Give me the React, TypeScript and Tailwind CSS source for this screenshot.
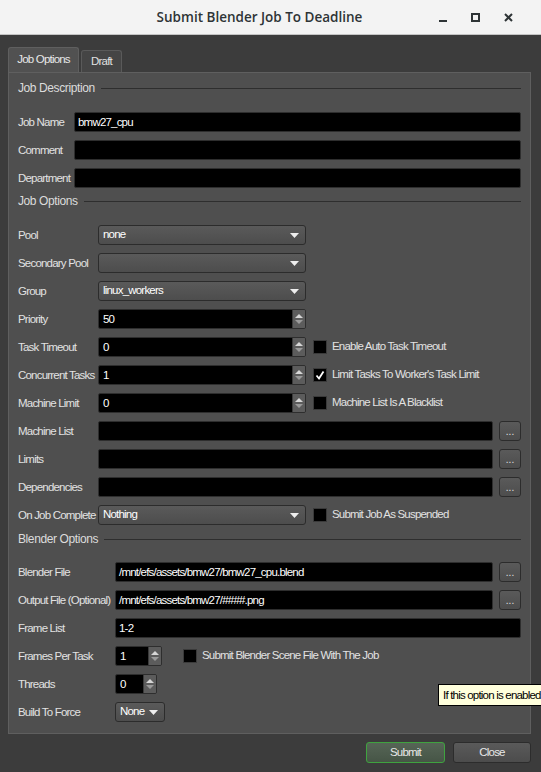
import React from 'react';

const UI_FONT = { fontFamily: '"Liberation Sans Narrow", "Liberation Sans", Arial, sans-serif' };

function Label({ text, width }: { text: string; width: string }) {
  return <div className={`${width} shrink-0 text-[#e2e2e2] leading-5 whitespace-nowrap`}>{text}</div>;
}

function TextField({ value = '', className = '' }: { value?: string; className?: string }) {
  return (
    <div className={`h-5 bg-black border border-[#2e2e2e] rounded-[2px] px-[3px] leading-[18px] text-white whitespace-nowrap overflow-hidden ${className}`}>
      {value}
    </div>
  );
}

function Arrow() {
  return (
    <svg width="9" height="5" viewBox="0 0 9 5" className="shrink-0">
      <path d="M0 0 L9 0 L4.5 5 Z" fill="#eeeeee" />
    </svg>
  );
}

function Dropdown({ value = '', className = '' }: { value?: string; className?: string }) {
  return (
    <div className={`h-5 flex items-center justify-between rounded-[3px] border border-[#2c2c2c] bg-gradient-to-b from-[#5a5a5a] to-[#4d4d4d] pl-[4px] pr-[6px] text-white ${className}`}>
      <span className="whitespace-nowrap">{value}</span>
      <Arrow />
    </div>
  );
}

function Spin({ value, className = '' }: { value: string; className?: string }) {
  return (
    <div className={`h-5 flex rounded-[2px] border border-[#2e2e2e] overflow-hidden ${className}`}>
      <div className="flex-1 bg-black px-[4px] leading-[18px] text-white">{value}</div>
      <div className="w-[13px] bg-[#5c5c5c] border-l border-[#3a3a3a] flex flex-col items-center justify-center gap-[2px]">
        <svg width="8" height="4" viewBox="0 0 8 4"><path d="M0 4 L8 4 L4 0 Z" fill="#d6d6d6" /></svg>
        <svg width="8" height="4" viewBox="0 0 8 4"><path d="M0 0 L8 0 L4 4 Z" fill="#9a9a9a" /></svg>
      </div>
    </div>
  );
}

function Check({ label, checked = false, className = '' }: { label: string; checked?: boolean; className?: string }) {
  return (
    <div className={`flex items-center gap-[5px] ${className}`}>
      <div className="w-[14px] h-[14px] bg-black border border-[#3a3a3a] flex items-center justify-center">
        {checked && (
          <svg width="10" height="10" viewBox="0 0 10 10">
            <path d="M1.5 5.5 L4 8.5 L8.5 1.5" stroke="#ffffff" strokeWidth="1.8" fill="none" />
          </svg>
        )}
      </div>
      <span className="text-[#e2e2e2] whitespace-nowrap">{label}</span>
    </div>
  );
}

function Browse() {
  return (
    <div className="ml-[6px] w-[22px] h-5 shrink-0 rounded-[3px] border border-[#2c2c2c] bg-gradient-to-b from-[#5a5a5a] to-[#4d4d4d] text-[10px] tracking-normal text-[#e0e0e0] flex items-end justify-center pb-[3px] leading-none">
      ...
    </div>
  );
}

function GroupTitle({ text }: { text: string }) {
  return (
    <div className="h-[14px] flex items-center gap-[6px]">
      <span className="text-[12px] tracking-[-0.4px] text-[#dcdcdc] whitespace-nowrap">{text}</span>
      <div className="flex-1 h-px bg-[#2e2e2e]" />
    </div>
  );
}

function Row({ children }: { children: React.ReactNode }) {
  return <div className="h-5 flex items-center">{children}</div>;
}

export default function App() {
  return (
    <div className="w-[541px] h-[772px] bg-[#3c3c3c] relative overflow-hidden text-[11.5px] tracking-[-0.8px]" style={UI_FONT}>
      {/* title bar */}
      <div className="h-[35px] bg-[#f3f3f3] border-b border-[#c4c4c4] flex items-center relative tracking-normal">
        <div
          className="absolute left-0 right-[22px] text-center text-[13.5px] font-semibold text-[#2e3436]"
          style={{ fontFamily: '"Open Sans", "Noto Sans", sans-serif' }}
        >
          Submit Blender Job To Deadline
        </div>
        <div className="ml-auto flex items-center gap-[24px] pr-[28px]">
          <svg width="8" height="10" viewBox="0 0 8 10"><rect x="0" y="8" width="8" height="2" fill="#2e3436" /></svg>
          <svg width="9" height="9" viewBox="0 0 9 9"><rect x="1" y="1" width="7" height="7" stroke="#2e3436" strokeWidth="2" fill="none" /></svg>
          <svg width="9" height="9" viewBox="0 0 9 9"><path d="M1 1 L8 8 M8 1 L1 8" stroke="#2e3436" strokeWidth="2" /></svg>
        </div>
      </div>

      {/* tabs */}
      <div className="pl-[8px] pt-[12px] flex items-end h-[37px]">
        <div className="h-[25px] w-[71px] bg-[#515151] border border-b-0 border-[#5f5f5f] rounded-t-[3px] text-[#e8e8e8] flex items-center justify-center">
          Job Options
        </div>
        <div className="ml-[2px] h-[22px] w-[41px] bg-[#454545] border border-b-0 border-[#5a5a5a] rounded-t-[3px] text-[#e0e0e0] flex items-center justify-center">
          Draft
        </div>
      </div>

      {/* panel */}
      <div className="ml-[8px] w-[523px] h-[662px] bg-[#4f4f4f] border border-[#5f5f5f] px-[9px] pt-[8px]">
        <GroupTitle text="Job Description" />
        <div className="mt-[17px] flex flex-col gap-2">
          <Row><Label text="Job Name" width="w-[56px]" /><TextField value="bmw27_cpu" className="flex-1" /></Row>
          <Row><Label text="Comment" width="w-[56px]" /><TextField className="flex-1" /></Row>
          <Row><Label text="Department" width="w-[56px]" /><TextField className="flex-1" /></Row>
        </div>

        <div className="mt-[6px]"><GroupTitle text="Job Options" /></div>
        <div className="mt-[17px] flex flex-col gap-2">
          <Row><Label text="Pool" width="w-[80px]" /><Dropdown value="none" className="w-[208px]" /></Row>
          <Row><Label text="Secondary Pool" width="w-[80px]" /><Dropdown className="w-[208px]" /></Row>
          <Row><Label text="Group" width="w-[80px]" /><Dropdown value="linux_workers" className="w-[208px]" /></Row>
          <Row><Label text="Priority" width="w-[80px]" /><Spin value="50" className="w-[208px]" /></Row>
          <Row>
            <Label text="Task Timeout" width="w-[80px]" />
            <Spin value="0" className="w-[208px]" />
            <Check label="Enable Auto Task Timeout" className="ml-[7px]" />
          </Row>
          <Row>
            <Label text="Concurrent Tasks" width="w-[80px]" />
            <Spin value="1" className="w-[208px]" />
            <Check label="Limit Tasks To Worker's Task Limit" checked className="ml-[7px]" />
          </Row>
          <Row>
            <Label text="Machine Limit" width="w-[80px]" />
            <Spin value="0" className="w-[208px]" />
            <Check label="Machine List Is A Blacklist" className="ml-[7px]" />
          </Row>
          <Row><Label text="Machine List" width="w-[80px]" /><TextField className="flex-1" /><Browse /></Row>
          <Row><Label text="Limits" width="w-[80px]" /><TextField className="flex-1" /><Browse /></Row>
          <Row><Label text="Dependencies" width="w-[80px]" /><TextField className="flex-1" /><Browse /></Row>
          <Row>
            <Label text="On Job Complete" width="w-[80px]" />
            <Dropdown value="Nothing" className="w-[208px]" />
            <Check label="Submit Job As Suspended" className="ml-[7px]" />
          </Row>
        </div>

        <div className="mt-[7px]"><GroupTitle text="Blender Options" /></div>
        <div className="mt-[16px] flex flex-col gap-2">
          <Row><Label text="Blender File" width="w-[97px]" /><TextField value="/mnt/efs/assets/bmw27/bmw27_cpu.blend" className="flex-1" /><Browse /></Row>
          <Row><Label text="Output File (Optional)" width="w-[97px]" /><TextField value="/mnt/efs/assets/bmw27/####.png" className="flex-1" /><Browse /></Row>
          <Row><Label text="Frame List" width="w-[97px]" /><TextField value="1-2" className="flex-1" /></Row>
          <Row>
            <Label text="Frames Per Task" width="w-[97px]" />
            <Spin value="1" className="w-[47px]" />
            <Check label="Submit Blender Scene File With The Job" className="ml-[21px]" />
          </Row>
          <Row><Label text="Threads" width="w-[97px]" /><Spin value="0" className="w-[42px]" /></Row>
          <Row><Label text="Build To Force" width="w-[97px]" /><Dropdown value="None" className="w-[50px]" /></Row>
        </div>
      </div>

      {/* buttons */}
      <div className="mt-[8px] w-[531px] flex justify-end gap-[8px]">
        <div className="w-[79px] h-[21px] rounded-[3px] border border-[#3fa33f] bg-gradient-to-b from-[#566556] to-[#465546] text-[#e8e8e8] flex items-center justify-center">
          Submit
        </div>
        <div className="w-[78px] h-[21px] rounded-[3px] border border-[#2c2c2c] bg-gradient-to-b from-[#5a5a5a] to-[#4c4c4c] text-[#e8e8e8] flex items-center justify-center">
          Close
        </div>
      </div>

      {/* tooltip */}
      <div className="absolute left-[438px] top-[684px] h-[22px] pl-[4px] pr-[20px] bg-[#ffffdc] border border-black text-black leading-[20px] whitespace-nowrap">
        If this option is enabled, the job will be submitted
      </div>
    </div>
  );
}
